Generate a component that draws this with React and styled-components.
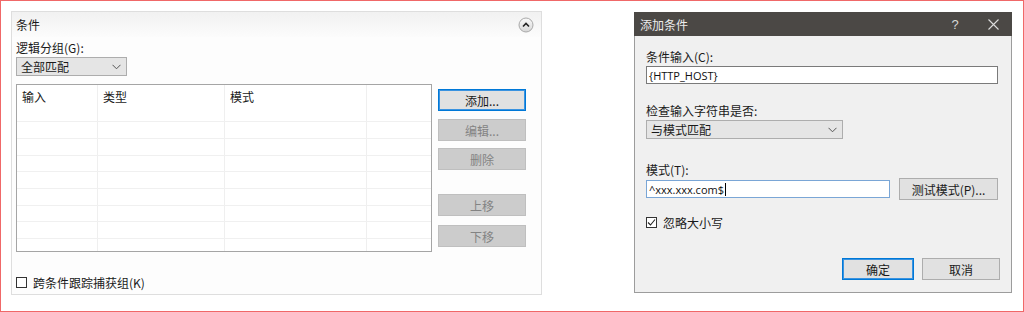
import React from 'react'
import styled, { createGlobalStyle } from 'styled-components'

const GlobalStyle = createGlobalStyle`
  body {
    margin: 0;
    font-family: "Noto Sans CJK SC", "Liberation Sans", sans-serif;
    font-size: 12px;
    color: #1a1a1a;
  }
`

const Frame = styled.div`
  width: 1024px;
  height: 312px;
  box-sizing: border-box;
  border: 1px solid #f06868;
  background: #ffffff;
  display: flex;
  align-items: flex-start;
  padding: 10px 0 0 10px;
`

const Panel = styled.div`
  width: 531px;
  height: 284px;
  box-sizing: border-box;
  border: 1px solid #dedede;
  background: #fdfdfd;
  display: flex;
  flex-direction: column;
`

const PanelHeader = styled.div`
  height: 25px;
  display: flex;
  align-items: center;
  justify-content: space-between;
  padding: 0 7px 0 4px;
  background: linear-gradient(#f1f1f1, #fcfcfc);
`

const PanelBody = styled.div`
  padding: 0 4px;
  display: flex;
  flex-direction: column;
`

const Label = styled.div`
  height: 16px;
  line-height: 16px;
  margin-top: ${(p) => p.$top || 0}px;
`

const Select = styled.div`
  width: ${(p) => p.$w}px;
  height: 19px;
  box-sizing: border-box;
  margin-top: ${(p) => p.$top || 0}px;
  border: 1px solid #adadad;
  background: #e5e5e5;
  display: flex;
  align-items: center;
  justify-content: space-between;
  padding: 0 5px 0 4px;
`

const MainRow = styled.div`
  display: flex;
  margin-top: 8px;
`

const ListView = styled.div`
  width: 416px;
  height: 168px;
  box-sizing: border-box;
  border: 1px solid #a5a5a5;
  background: #fff;
  display: flex;
  flex-direction: column;
  overflow: hidden;
`

const ListRow = styled.div`
  display: grid;
  grid-template-columns: 81px 127px 142px 1fr;
  height: ${(p) => p.$h}px;
  box-sizing: border-box;
  border-bottom: 1px solid ${(p) => (p.$last ? 'transparent' : '#f0f0f0')};
  flex-shrink: 0;
`

const Cell = styled.div`
  border-right: 1px solid #efefef;
  padding: 4px 0 0 5px;
  line-height: 16px;
  &:last-child {
    border-right: none;
  }
`

const ButtonCol = styled.div`
  display: flex;
  flex-direction: column;
  margin-left: 6px;
  padding-top: 5px;
`

const Button = styled.div`
  width: ${(p) => p.$w || 88}px;
  height: 22px;
  box-sizing: border-box;
  margin-top: ${(p) => p.$top || 0}px;
  display: flex;
  align-items: center;
  justify-content: center;
  border: 1px solid ${(p) => (p.$primary ? '#0078d7' : p.$disabled ? '#bfbfbf' : '#adadad')};
  box-shadow: ${(p) => (p.$primary ? 'inset 0 0 0 1px #3a93e0' : 'none')};
  background: ${(p) => (p.$disabled ? '#cccccc' : '#e1e1e1')};
  color: ${(p) => (p.$disabled ? '#838383' : '#1a1a1a')};
`

const CheckRow = styled.div`
  display: flex;
  align-items: center;
  height: 16px;
  margin-top: ${(p) => p.$top || 0}px;
  gap: 6px;
`

const CheckBox = styled.div`
  width: 11px;
  height: 11px;
  box-sizing: border-box;
  border: 1px solid #333;
  background: #fff;
  display: flex;
  align-items: center;
  justify-content: center;
`

const Dialog = styled.div`
  width: 378px;
  height: 281px;
  margin: 1px 0 0 92px;
  display: flex;
  flex-direction: column;
  box-sizing: border-box;
  border: 1px solid #9c9c9c;
  background: #f0f0f0;
`

const TitleBar = styled.div`
  height: 23px;
  background: #4b4845;
  color: #ececec;
  display: flex;
  align-items: center;
  padding-left: 6px;
  margin: -1px -1px 0 -1px;
  padding-top: 1px;
`

const TitleText = styled.div`
  flex: 1;
`

const TitleIcon = styled.div`
  width: 38px;
  display: flex;
  justify-content: center;
  align-items: center;
  color: #d8d8d8;
  font-family: "Liberation Sans", sans-serif;
  font-size: 13px;
`

const DialogBody = styled.div`
  padding: 0 11px;
  display: flex;
  flex-direction: column;
`

const TextInput = styled.div`
  width: ${(p) => p.$w}px;
  height: 18px;
  box-sizing: border-box;
  margin-top: ${(p) => p.$top || 0}px;
  border: 1px solid ${(p) => (p.$focus ? '#7aa6d6' : '#7a7a7a')};
  background: #fff;
  display: flex;
  align-items: center;
  padding-left: 2px;
  font-family: "Open Sans", "Noto Sans CJK SC", sans-serif;
  font-size: 11px;
  color: #111;
`

const Caret = styled.span`
  display: inline-block;
  width: 1px;
  height: 13px;
  background: #000;
  margin-left: 1px;
`

const PatternRow = styled.div`
  display: flex;
  align-items: center;
  margin-top: 0px;
  gap: 9px;
  height: 22px;
`

const FooterRow = styled.div`
  display: flex;
  justify-content: flex-end;
  gap: 8px;
  margin-top: 28px;
`

const Chevron = () => (
  <svg width="9" height="6" viewBox="0 0 9 6">
    <path d="M0.5 0.8 L4.5 4.8 L8.5 0.8" fill="none" stroke="#555" strokeWidth="1" />
  </svg>
)

const CollapseIcon = () => (
  <svg width="16" height="16" viewBox="0 0 16 16">
    <defs>
      <linearGradient id="cg" x1="0" y1="0" x2="0" y2="1">
        <stop offset="0" stopColor="#fafafa" />
        <stop offset="1" stopColor="#d6d6d6" />
      </linearGradient>
    </defs>
    <circle cx="8" cy="8" r="7" fill="url(#cg)" stroke="#a9a9a9" />
    <path d="M5 9.5 L8 6.5 L11 9.5" fill="none" stroke="#222" strokeWidth="1.6" />
  </svg>
)

const rowHeights = [17, 17, 16, 17, 17, 16, 17, 14]

export default function App() {
  return (
    <>
      <GlobalStyle />
      <Frame>
        <Panel>
          <PanelHeader>
            <span>条件</span>
            <CollapseIcon />
          </PanelHeader>
          <PanelBody>
            <Label $top={3}>逻辑分组(G):</Label>
            <Select $w={111} $top={1}>
              <span>全部匹配</span>
              <Chevron />
            </Select>
            <MainRow>
              <ListView>
                <ListRow $h={37}>
                  <Cell>输入</Cell>
                  <Cell>类型</Cell>
                  <Cell>模式</Cell>
                  <Cell />
                </ListRow>
                {rowHeights.map((h, i) => (
                  <ListRow key={i} $h={h} $last={i === rowHeights.length - 1}>
                    <Cell />
                    <Cell />
                    <Cell />
                    <Cell />
                  </ListRow>
                ))}
              </ListView>
              <ButtonCol>
                <Button $primary>添加...</Button>
                <Button $disabled $top={8}>编辑...</Button>
                <Button $disabled $top={7}>删除</Button>
                <Button $disabled $top={24}>上移</Button>
                <Button $disabled $top={9}>下移</Button>
              </ButtonCol>
            </MainRow>
            <CheckRow $top={22}>
              <CheckBox />
              <span>跨条件跟踪捕获组(K)</span>
            </CheckRow>
          </PanelBody>
        </Panel>

        <Dialog>
          <TitleBar>
            <TitleText>添加条件</TitleText>
            <TitleIcon>?</TitleIcon>
            <TitleIcon>
              <svg width="11" height="11" viewBox="0 0 11 11">
                <path d="M0.5 0.5 L10.5 10.5 M10.5 0.5 L0.5 10.5" stroke="#dcdcdc" strokeWidth="1.1" />
              </svg>
            </TitleIcon>
          </TitleBar>
          <DialogBody>
            <Label $top={13}>条件输入(C):</Label>
            <TextInput $w={352} $top={1}>{'{HTTP_HOST}'}</TextInput>
            <Label $top={19}>检查输入字符串是否:</Label>
            <Select $w={197} $top={1}>
              <span>与模式匹配</span>
              <Chevron />
            </Select>
            <Label $top={23}>模式(T):</Label>
            <PatternRow>
              <TextInput $w={244} $focus>
                ^xxx.xxx.com$<Caret />
              </TextInput>
              <Button $w={99}>测试模式(P)...</Button>
            </PatternRow>
            <CheckRow $top={14}>
              <CheckBox>
                <svg width="9" height="9" viewBox="0 0 9 9">
                  <path d="M1 4.5 L3.5 7 L8 1.5" fill="none" stroke="#222" strokeWidth="1.1" />
                </svg>
              </CheckBox>
              <span>忽略大小写</span>
            </CheckRow>
            <FooterRow>
              <Button $primary $w={72}>确定</Button>
              <Button $w={78}>取消</Button>
            </FooterRow>
          </DialogBody>
        </Dialog>
      </Frame>
    </>
  )
}
